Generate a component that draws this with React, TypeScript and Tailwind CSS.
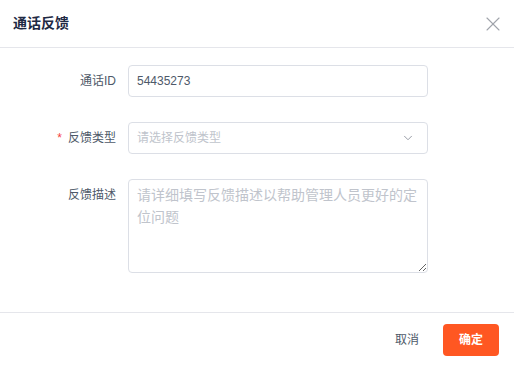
import React from 'react'
import { X, ChevronDown } from 'lucide-react'

const font = { fontFamily: '"Liberation Sans", "Noto Sans CJK SC", sans-serif' }

function Label({ children, required }: { children: React.ReactNode; required?: boolean }) {
  return (
    <div className="w-[128px] shrink-0 pr-[12px] text-right text-[12px] leading-[32px] text-[#4e5969]">
      {required && <span className="mr-[6px] text-[#f53f3f]">*</span>}
      {children}
    </div>
  )
}

export default function App() {
  return (
    <div className="w-[514px] h-[366px] bg-white flex flex-col" style={font}>
      {/* Header */}
      <div className="h-[48px] shrink-0 flex items-center justify-between pl-[13px] pr-[9px] border-b border-[#e5e6eb]">
        <div className="text-[14px] font-bold text-[#1f2a44]">通话反馈</div>
        <X className="h-[24px] w-[24px] text-[#a0a4ab]" strokeWidth={1.1} />
      </div>

      {/* Body */}
      <div className="flex-1 flex flex-col gap-[25px] pt-[17px]">
        <div className="flex">
          <Label>通话ID</Label>
          <input
            defaultValue="54435273"
            className="w-[300px] h-[32px] rounded-[4px] border border-[#dcdfe6] px-[8px] text-[12px] text-[#4e5969] outline-none"
          />
        </div>

        <div className="flex">
          <Label required>反馈类型</Label>
          <div className="w-[300px] h-[32px] rounded-[4px] border border-[#dcdfe6] pl-[8px] pr-[12px] flex items-center justify-between">
            <span className="text-[12px] text-[#c0c4cc]">请选择反馈类型</span>
            <ChevronDown className="h-[14px] w-[14px] text-[#8a8f99]" strokeWidth={1.5} />
          </div>
        </div>

        <div className="flex">
          <Label>反馈描述</Label>
          <textarea
            placeholder="请详细填写反馈描述以帮助管理人员更好的定位问题"
            className="w-[300px] h-[94px] rounded-[4px] border border-[#dcdfe6] px-[8px] py-[4px] text-[14px] leading-[22px] text-[#4e5969] placeholder:text-[#c0c4cc] outline-none"
          />
        </div>
      </div>

      {/* Footer */}
      <div className="h-[54px] shrink-0 border-t border-[#e5e6eb] flex items-center justify-end gap-[24px] pr-[15px]">
        <span className="text-[12px] text-[#4e5969]">取消</span>
        <button className="w-[56px] h-[32px] rounded-[4px] bg-[#ff5722] text-white text-[12px] font-bold">
          确定
        </button>
      </div>
    </div>
  )
}
